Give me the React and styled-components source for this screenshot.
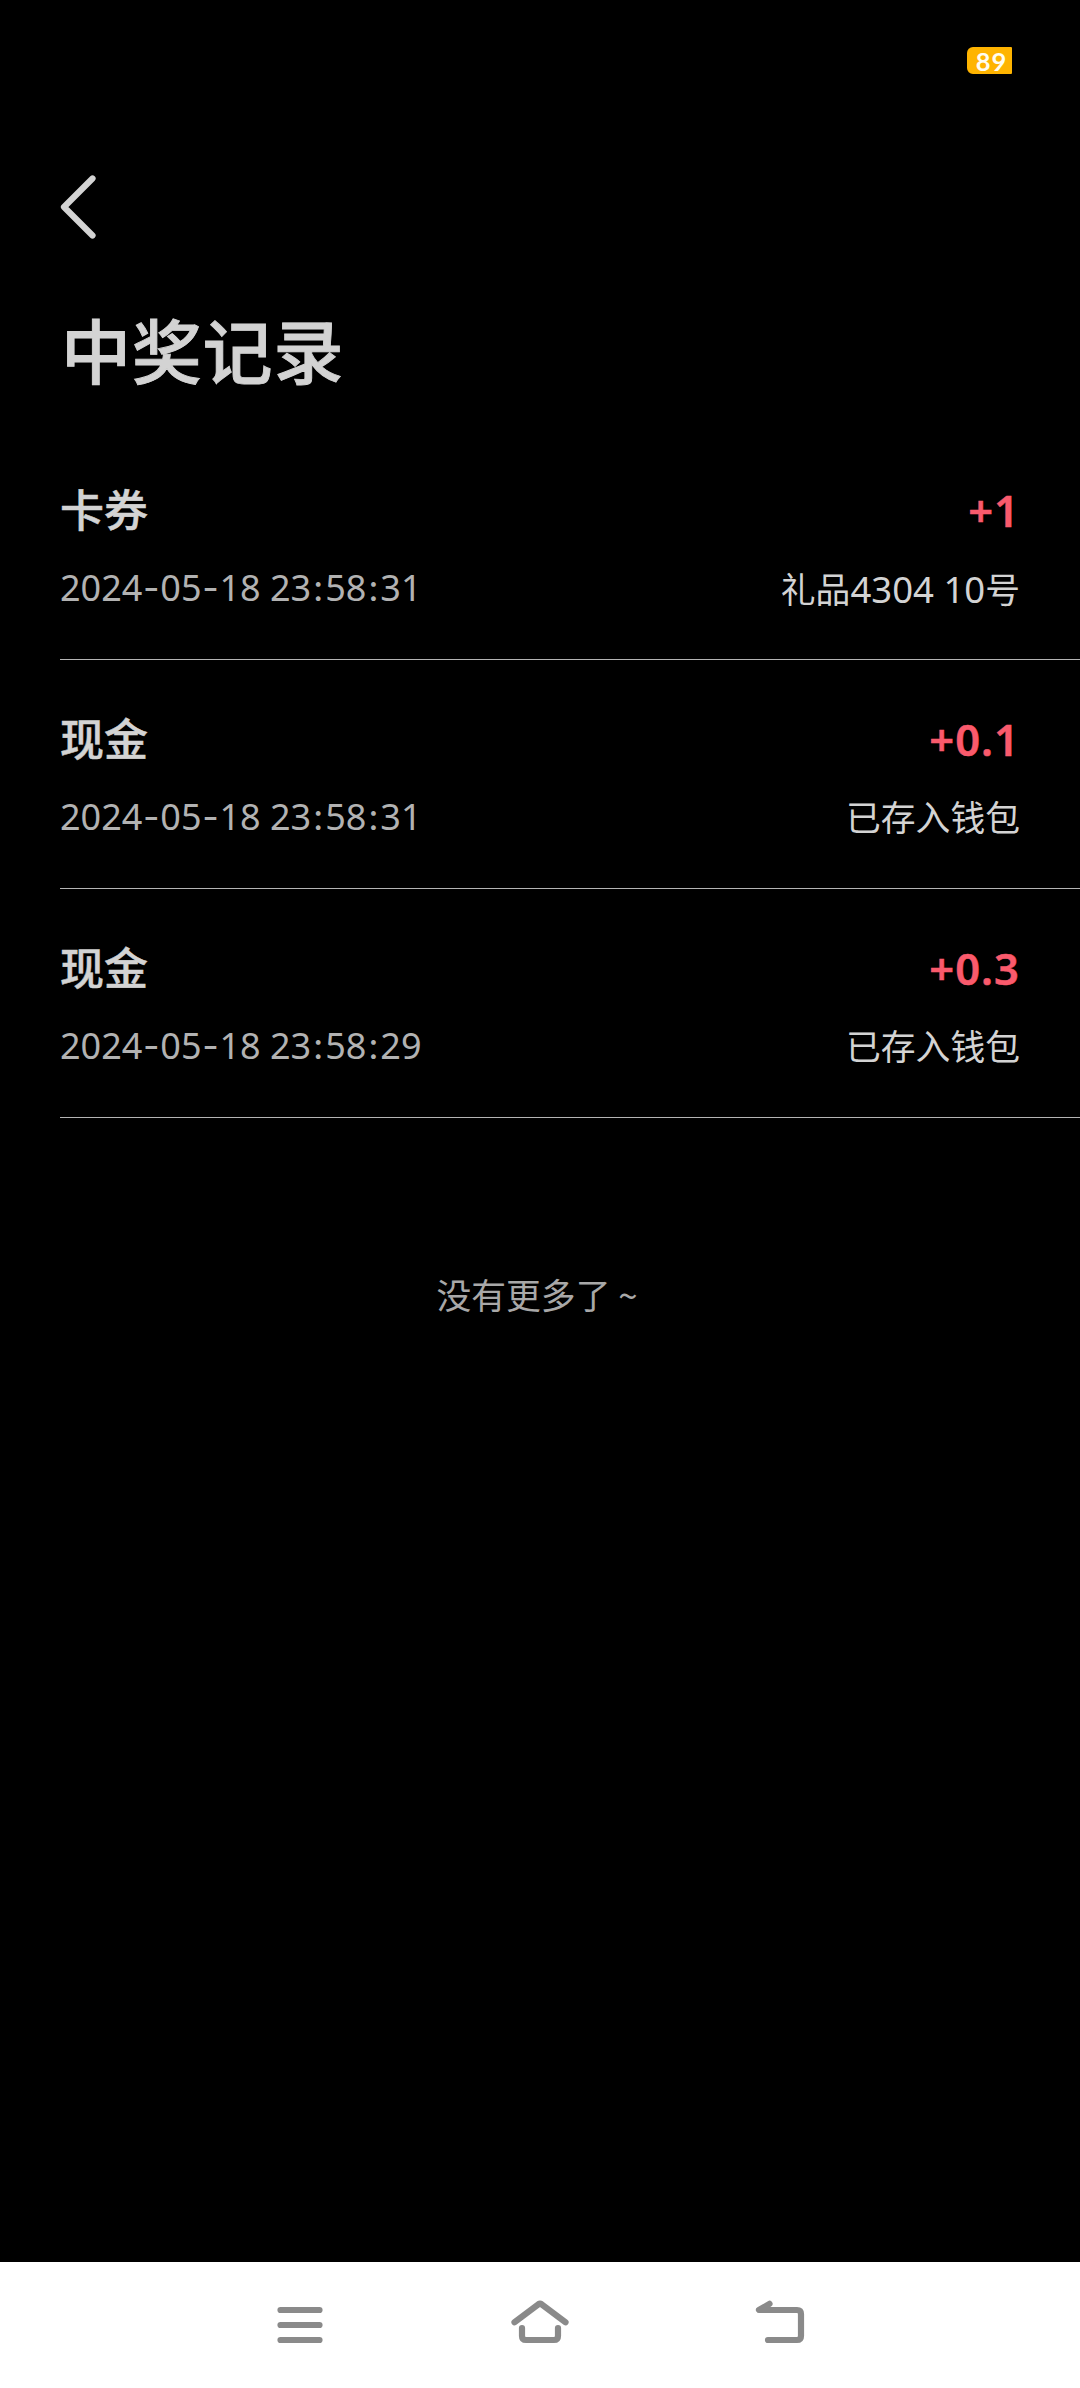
import React from 'react';
import styled, { createGlobalStyle } from 'styled-components';

const GlobalStyle = createGlobalStyle`
  * {
    box-sizing: border-box;
  }

  body {
    margin: 0;
    background: #000;
    font-family: "Noto Sans", "Noto Sans CJK SC", sans-serif;
  }
`;

const Screen = styled.div`
  display: flex;
  flex-direction: column;
  width: 1080px;
  height: 2388px;
  overflow: hidden;
  background: #000;
  color: #d3d3d3;
`;

const StatusBar = styled.header`
  display: flex;
  justify-content: flex-end;
  height: 97px;
  padding: 47px 68px 0 0;
`;

const Battery = styled.div`
  width: 45px;
  height: 27px;
  padding-left: 4px;
  border-radius: 6px 1px 1px 6px;
  background: #ffb400;
  color: #fffdf0;
  font-family: Lato, sans-serif;
  font-size: 25.5px;
  font-weight: 700;
  line-height: 28px;
  letter-spacing: 1px;
  text-align: center;
`;

const NavBar = styled.div`
  height: 203px;
  padding: 75px 0 0 54px;
`;

const BackButton = styled.button`
  display: block;
  padding: 0;
  border: 0;
  background: none;

  svg {
    display: block;
  }
`;

const Title = styled.h1`
  height: 131px;
  margin: 0;
  padding-left: 61px;
  font-size: 70px;
  font-weight: 500;
  line-height: 104px;
  letter-spacing: 0.8px;
  -webkit-text-stroke: 0.9px currentColor;
`;

const RecordList = styled.ul`
  margin: 0;
  padding: 0 0 0 60px;
  list-style: none;
`;

const Record = styled.li`
  height: 229px;
  padding: 44px 60px 0 0;
  border-bottom: 1px solid #b4b4b4;
`;

const Line = styled.div`
  display: flex;
  justify-content: space-between;
  height: ${({ $height }) => $height}px;
  line-height: ${({ $height }) => $height}px;
`;

const Name = styled.span`
  font-size: 44px;
  font-weight: 500;
  -webkit-text-stroke: 0.5px currentColor;
`;

const Amount = styled.span`
  color: #fa5a6c;
  font-size: 43.5px;
  font-weight: 600;
  letter-spacing: 1px;
  -webkit-text-stroke: 0.5px currentColor;
`;

const Time = styled.time`
  padding-top: 1px;
  color: #b2b2b2;
  font-size: 36px;
`;

const Separator = styled.span`
  font-family: Inter, sans-serif;
  padding: 0 ${({ $gap }) => $gap}px;
`;

const Note = styled.span`
  padding-top: 2px;
  font-size: 34.8px;
`;

const Digits = styled.span`
  font-size: 36.5px;
`;

const ListEnd = styled.p`
  flex: 1;
  margin: 0;
  padding: 150px 6px 0 0;
  color: #a8a8a8;
  font-family: "Noto Sans CJK SC", sans-serif;
  font-size: 34.8px;
  line-height: 52px;
  text-align: center;
`;

const SystemBar = styled.nav`
  display: flex;
  height: 126px;
  background: #fff;

  svg {
    display: block;
  }
`;

const records = [
  {
    id: 1, name: '卡券', amount: '+1', time: '2024-05-18 23:58:31', note: '礼品4304 10号',
  },
  {
    id: 2, name: '现金', amount: '+0.1', time: '2024-05-18 23:58:31', note: '已存入钱包',
  },
  {
    id: 3, name: '现金', amount: '+0.3', time: '2024-05-18 23:58:29', note: '已存入钱包',
  },
];

function Timestamp({ value }) {
  return (
    <Time>
      {value.split(/([-:])/).map((part, i) => (
        /^[-:]$/.test(part)
          ? <Separator key={i} $gap={part === ':' ? 1.8 : 0.7}>{part}</Separator>
          : part
      ))}
    </Time>
  );
}

function NoteText({ value }) {
  return (
    <Note>
      {value.split(/([\d ]+)/).map((part, i) => (
        /^\d/.test(part) ? <Digits key={i}>{part}</Digits> : part
      ))}
    </Note>
  );
}

export default function App() {
  return (
    <>
      <GlobalStyle />
      <Screen>
        <StatusBar>
          <Battery>89</Battery>
        </StatusBar>
        <NavBar>
          <BackButton type="button" aria-label="返回">
            <svg width="50" height="70" viewBox="0 0 50 70" fill="none" stroke="#d3d3d3" strokeWidth="6.2" strokeLinecap="round" strokeLinejoin="round">
              <path d="M38.500 6.500L10 35L38.500 63.500" />
            </svg>
          </BackButton>
        </NavBar>
        <Title>中奖记录</Title>
        <RecordList>
          {records.map((record) => (
            <Record key={record.id}>
              <Line $height={70}>
                <Name>{record.name}</Name>
                <Amount>{record.amount}</Amount>
              </Line>
              <Line $height={84}>
                <Timestamp value={record.time} />
                <NoteText value={record.note} />
              </Line>
            </Record>
          ))}
        </RecordList>
        <ListEnd>没有更多了 ~</ListEnd>
        <SystemBar>
          <svg width="1080" height="126" viewBox="0 0 1080 126" fill="none" stroke="#8a8a8a" strokeWidth="6.2" strokeLinecap="round" strokeLinejoin="round">
            <path d="M280.500 48H319.500M280.500 63H319.500M280.500 78H319.500" />
            <path d="M514.500 60.300L538.500 42.200Q540 41.200 541.500 42.200L565.500 60.300M522 66V74Q522 78 526 78H554Q558 78 558 74V66" />
            <path d="M769.500 41.800L759 48H797Q801 48 801 52V74Q801 78 797 78H768" />
          </svg>
        </SystemBar>
      </Screen>
    </>
  );
}
